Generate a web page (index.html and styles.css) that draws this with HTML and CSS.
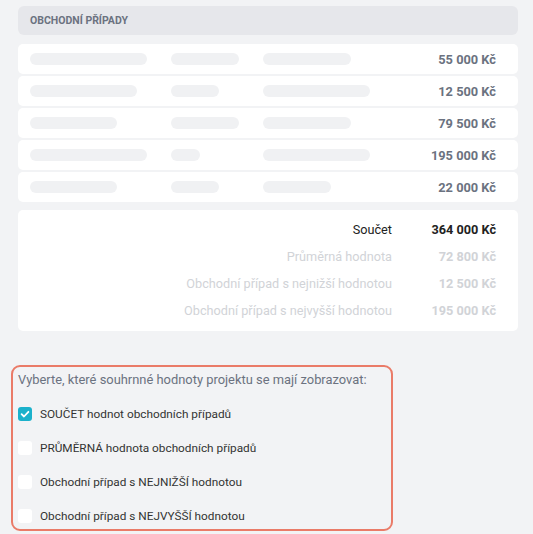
FILE: index.html
```html
<!DOCTYPE html>
<html lang="cs">
<head>
<meta charset="utf-8">
<link rel="stylesheet" href="styles.css">
</head>
<body>
<div class="page">
  <div class="section-head">OBCHODNÍ PŘÍPADY</div>
  <div class="rows">
    <div class="row"><span class="sk a" style="width:117px"></span><span class="sk b" style="width:68px"></span><span class="sk c" style="width:88px"></span><span class="amount">55 000 Kč</span></div>
    <div class="row"><span class="sk a" style="width:107px"></span><span class="sk b" style="width:48px"></span><span class="sk c" style="width:107px"></span><span class="amount">12 500 Kč</span></div>
    <div class="row"><span class="sk a" style="width:87px"></span><span class="sk b" style="width:68px"></span><span class="sk c" style="width:88px"></span><span class="amount">79 500 Kč</span></div>
    <div class="row"><span class="sk a" style="width:117px"></span><span class="sk b" style="width:29px"></span><span class="sk c" style="width:107px"></span><span class="amount">195 000 Kč</span></div>
    <div class="row"><span class="sk a" style="width:87px"></span><span class="sk b" style="width:48px"></span><span class="sk c" style="width:68px"></span><span class="amount">22 000 Kč</span></div>
  </div>
  <div class="summary">
    <span class="lbl active">Součet</span><span class="val active">364 000 Kč</span>
    <span class="lbl">Průměrná hodnota</span><span class="val">72 800 Kč</span>
    <span class="lbl">Obchodní případ s nejnižší hodnotou</span><span class="val">12 500 Kč</span>
    <span class="lbl">Obchodní případ s nejvyšší hodnotou</span><span class="val">195 000 Kč</span>
  </div>
  <div class="options">
    <div class="options-title">Vyberte, které souhrnné hodnoty projektu se mají zobrazovat:</div>
    <label class="opt"><span class="cb checked"><svg viewBox="0 0 14 14" width="14" height="14"><path d="M3.6 7.2 L6 9.5 L10.4 4.8" fill="none" stroke="#fff" stroke-width="1.8" stroke-linecap="round" stroke-linejoin="round"/></svg></span>SOUČET hodnot obchodních případů</label>
    <label class="opt"><span class="cb"></span>PRŮMĚRNÁ hodnota obchodních případů</label>
    <label class="opt"><span class="cb"></span>Obchodní případ s NEJNIŽŠÍ hodnotou</label>
    <label class="opt"><span class="cb"></span>Obchodní případ s NEJVYŠŠÍ hodnotou</label>
  </div>
</div>
</body>
</html>
```

FILE: styles.css
```css
* { box-sizing: border-box; }
html, body { margin: 0; padding: 0; }
body {
  background: #f2f3f5;
  font-family: Roboto, "Liberation Sans", sans-serif;
  width: 533px;
  height: 534px;
  overflow: hidden;
}
.page {
  padding: 6px 15px 0 18px;
}
.section-head {
  height: 29px;
  background: #e6e7eb;
  border-radius: 6px;
  font-size: 10.5px;
  font-weight: 700;
  color: #6b7280;
  padding-left: 12px;
  display: flex;
  align-items: center;
}
.rows {
  margin-top: 9px;
  display: flex;
  flex-direction: column;
  gap: 2px;
}
.row {
  height: 30px;
  background: #fff;
  border-radius: 5px;
  display: grid;
  grid-template-columns: 141px 92px 1fr auto;
  align-items: center;
  padding: 0 22px 0 12px;
}
.sk {
  height: 12px;
  border-radius: 6px;
  background: #f0f1f3;
}
.amount {
  font-size: 12.8px;
  font-weight: 700;
  color: #6b7280;
  text-align: right;
}
.summary {
  margin-top: 8px;
  background: #fff;
  border-radius: 5px;
  padding: 6px 22px 7px 0;
  display: grid;
  grid-template-columns: 1fr 90px;
  column-gap: 14px;
  grid-auto-rows: 27px;
  align-items: center;
  font-size: 12.7px;
}
.lbl { text-align: right; color: #d1d3d7; }
.val { text-align: right; color: #d1d3d7; font-weight: 700; }
.lbl.active { color: #222; }
.val.active { color: #222; }
.options {
  margin: 34px 0 0 -7px;
  width: 382px;
  height: 166px;
  border: 2px solid #ea7b68;
  border-radius: 9px;
  padding: 4px 5px 0 5px;
  display: flex;
  flex-direction: column;
  gap: 14px;
}
.options-title {
  font-size: 12.9px;
  line-height: 18px;
  color: #6b7280;
  margin-bottom: 1px;
}
.opt {
  height: 20px;
  display: flex;
  align-items: center;
  gap: 8px;
  font-size: 11.8px;
  color: #333;
}
.cb {
  width: 14px;
  height: 14px;
  border-radius: 3px;
  background: #fff;
  flex: none;
  display: flex;
}
.cb.checked { background: #1bb1cb; }
```
